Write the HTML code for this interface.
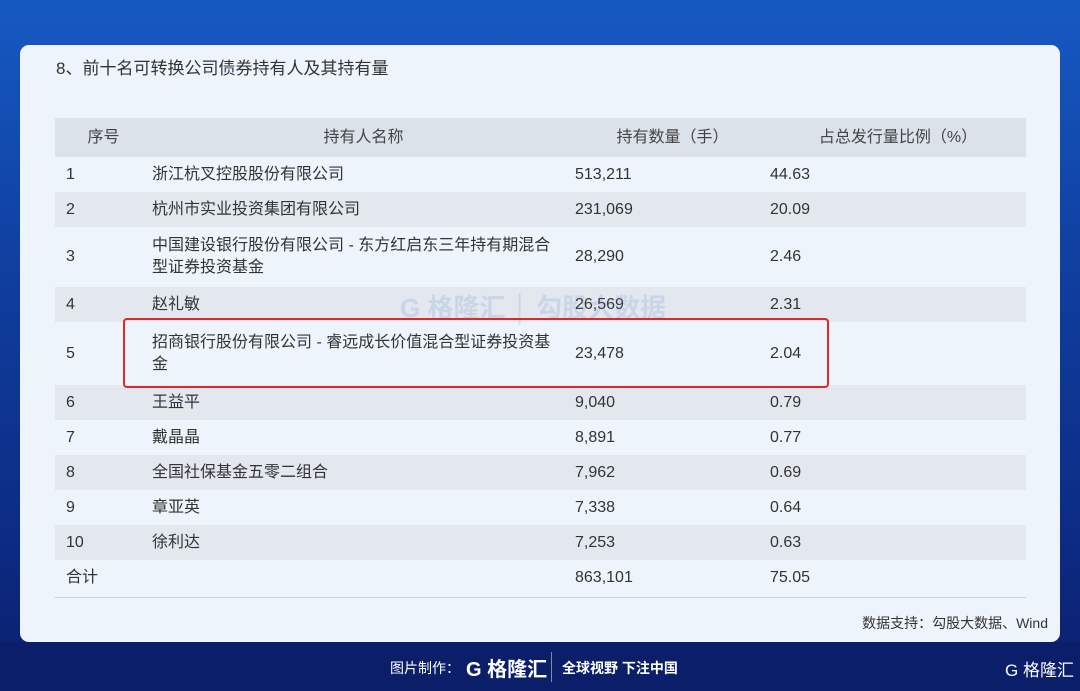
<!DOCTYPE html>
<html><head><meta charset="utf-8"><style>
*{margin:0;padding:0;box-sizing:border-box}
body{width:1080px;height:691px;overflow:hidden;font-family:"Liberation Sans","Noto Sans CJK SC",sans-serif;background:linear-gradient(180deg,#1659c2 0%,#0f3e9e 40%,#0c2a82 80%,#0b1f6b 100%);position:relative}
.card{position:absolute;left:20px;top:45px;width:1040px;height:597px;background:#eef4fb;border-radius:9px}
.title{position:absolute;left:56px;top:54px;font-size:17px;color:#333}
table{position:absolute;left:55px;top:118px;width:971px;border-collapse:collapse;font-size:16px;color:#333;table-layout:fixed}
td,th{padding:0;vertical-align:middle;text-align:left;line-height:22px}
th{background:#dbe2ea;font-weight:normal;height:39px;text-align:center;color:#444}
tr.g td{background:#e3e8ee}
td.a{padding-left:11px}
td.b{padding-right:20px}
.red{position:absolute;left:123px;top:318px;width:706px;height:70px;border:2px solid #e0272c;border-radius:4px}
.src{position:absolute;right:32px;top:613px;font-size:14px;color:#333}
.foot{position:absolute;left:0;top:642px;width:1080px;height:49px;background:#0b1e6a;color:#fff}
.wm{position:absolute;left:400px;top:288px;font-size:26px;color:rgba(90,130,200,.18);font-weight:bold}
</style></head><body>
<div class="card"></div>
<div class="title">8、前十名可转换公司债券持有人及其持有量</div>
<table>
<colgroup><col style="width:97px"><col style="width:423px"><col style="width:195px"><col></colgroup>
<tr><th>序号</th><th>持有人名称</th><th>持有数量（手）</th><th>占总发行量比例（%）</th></tr>
<tr style="height:35px"><td class="a">1</td><td class="b">浙江杭叉控股股份有限公司</td><td>513,211</td><td>44.63</td></tr>
<tr class="g" style="height:35px"><td class="a">2</td><td class="b">杭州市实业投资集团有限公司</td><td>231,069</td><td>20.09</td></tr>
<tr style="height:60px"><td class="a">3</td><td class="b">中国建设银行股份有限公司 - 东方红启东三年持有期混合型证券投资基金</td><td>28,290</td><td>2.46</td></tr>
<tr class="g" style="height:35px"><td class="a">4</td><td class="b">赵礼敏</td><td>26,569</td><td>2.31</td></tr>
<tr style="height:63px"><td class="a">5</td><td class="b">招商银行股份有限公司 - 睿远成长价值混合型证券投资基金</td><td>23,478</td><td>2.04</td></tr>
<tr class="g" style="height:35px"><td class="a">6</td><td class="b">王益平</td><td>9,040</td><td>0.79</td></tr>
<tr style="height:35px"><td class="a">7</td><td class="b">戴晶晶</td><td>8,891</td><td>0.77</td></tr>
<tr class="g" style="height:35px"><td class="a">8</td><td class="b">全国社保基金五零二组合</td><td>7,962</td><td>0.69</td></tr>
<tr style="height:35px"><td class="a">9</td><td class="b">章亚英</td><td>7,338</td><td>0.64</td></tr>
<tr class="g" style="height:35px"><td class="a">10</td><td class="b">徐利达</td><td>7,253</td><td>0.63</td></tr>
<tr style="height:37px;border-bottom:1px solid #ccd"><td class="a">合计</td><td class="b"></td><td>863,101</td><td>75.05</td></tr>
</table>
<div class="wm">G 格隆汇 │ 勾股大数据</div>
<div class="red"></div>
<div class="src">数据支持：勾股大数据、Wind</div>
<div class="foot">
<span style="position:absolute;left:390px;top:16px;font-size:14px">图片制作：</span>
<span style="position:absolute;left:466px;top:11px;font-size:20px;font-weight:bold">G 格隆汇</span>
<span style="position:absolute;left:551px;top:10px;width:1px;height:30px;background:#889"></span>
<span style="position:absolute;left:562px;top:16px;font-size:14px;font-weight:bold">全球视野 下注中国</span>
<span style="position:absolute;left:1005px;top:14px;font-size:17px">G 格隆汇</span>
</div>
</body></html>
